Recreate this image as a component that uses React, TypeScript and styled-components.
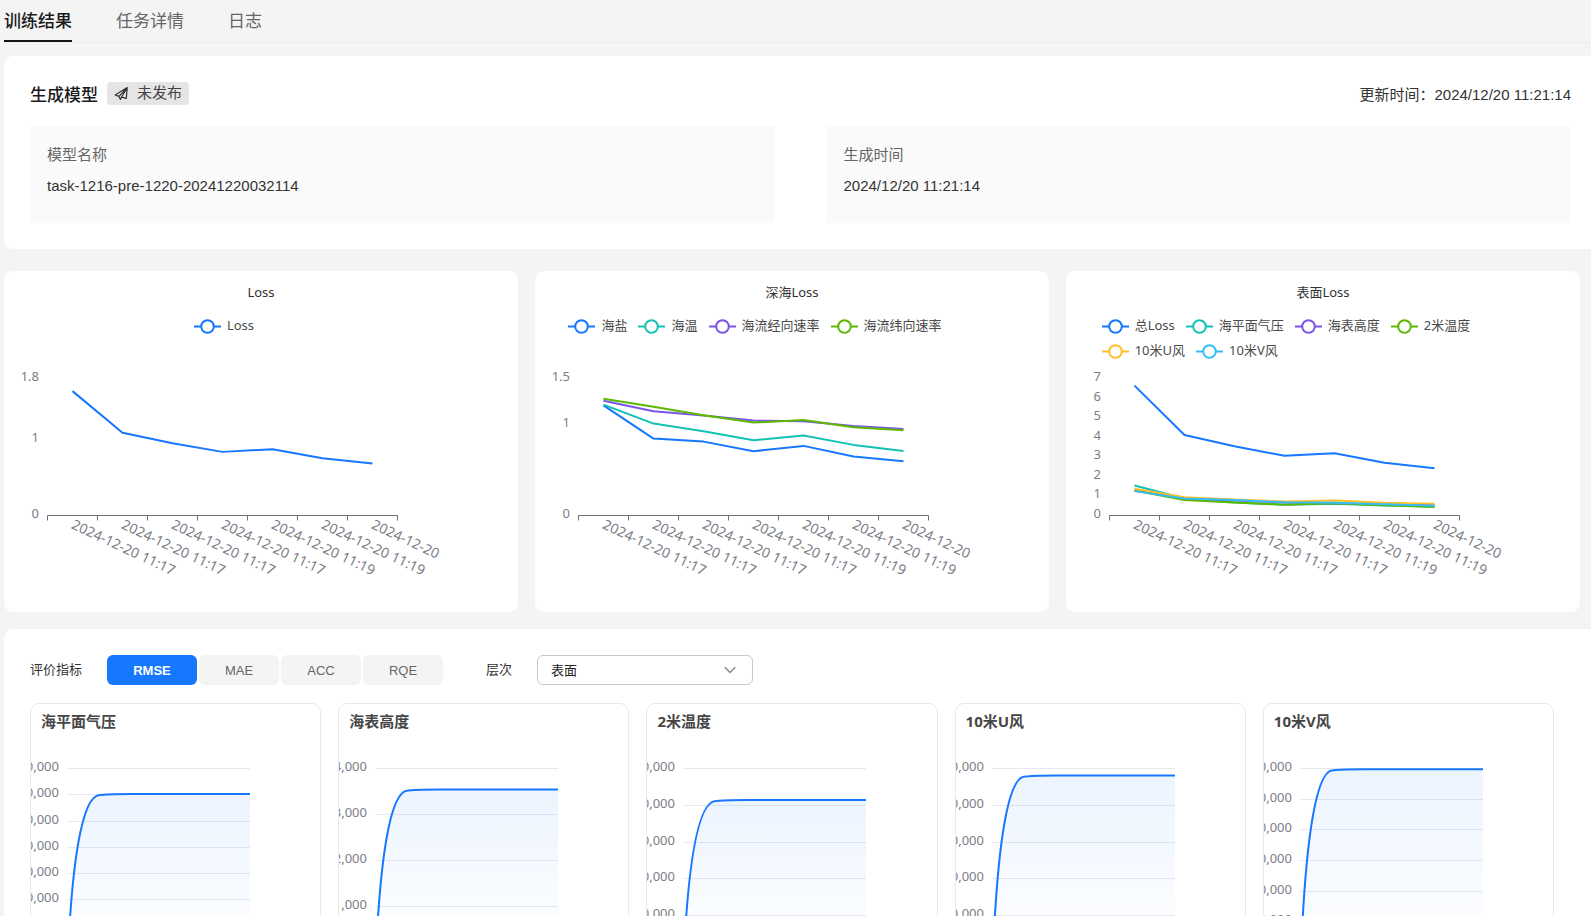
import React, { useState } from "react";
import styled, { createGlobalStyle } from "styled-components";

const uiFont = `"Liberation Sans", "Noto Sans CJK SC", sans-serif`;
const chartFont = `"Noto Sans", "Noto Sans CJK SC", sans-serif`;

const GlobalStyle = createGlobalStyle`
  *, *::before, *::after { box-sizing: border-box; }
  body { margin: 0; background: #f4f4f4; font-family: ${uiFont}; color: #333; }
  button, select { font-family: inherit; }
  h2, h3, p, dl, dd { margin: 0; }
`;

const Page = styled.main`
  height: 100vh;
  overflow-x: hidden;
  overflow-y: auto;
  scrollbar-width: none;
  padding-left: 4px;
`;

const Tabs = styled.nav`
  display: flex;
  gap: 44px;
  height: 43px;
  border-bottom: 1px solid #ececec;
`;

const Tab = styled.button<{ $active: boolean }>`
  height: 42px;
  padding: 4px 0 0;
  border: 0;
  border-bottom: 2px solid ${(p) => (p.$active ? "#141414" : "transparent")};
  background: none;
  font-size: 17px;
  line-height: 36px;
  font-weight: ${(p) => (p.$active ? 500 : 400)};
  color: ${(p) => (p.$active ? "#1a1a1a" : "#666")};
  cursor: pointer;
`;

const Panel = styled.section`
  background: #fff;
  border-radius: 9px 0 0 9px;
  padding: 26px 20px 26px 26px;
`;

const ModelPanel = styled(Panel)`
  margin-top: 13px;
`;

const ModelHeader = styled.header`
  display: flex;
  align-items: flex-start;
  height: 26px;
  margin-bottom: 18px;
`;

const ModelTitle = styled.h2`
  font-size: 17px;
  line-height: 28px;
  font-weight: 500;
  color: #1a1a1a;
`;

const Badge = styled.span`
  display: flex;
  align-items: center;
  gap: 8px;
  height: 23px;
  margin-left: 9px;
  padding: 0 7px 1px;
  border-radius: 4px;
  background: #e5e5e5;
  font-size: 15px;
  line-height: 20px;
  color: #444;
`;

const Updated = styled.p`
  margin-left: auto;
  font-size: 15px;
  line-height: 26px;
`;

const InfoGrid = styled.dl`
  display: grid;
  grid-template-columns: 1fr 1fr;
  gap: 52px;
`;

const InfoBox = styled.div`
  display: flex;
  flex-direction: column;
  gap: 9px;
  padding: 18px 17px 26px;
  background: #fafafa;
  font-size: 15px;
  line-height: 22px;

  dt { color: #666; }
`;

const LossGrid = styled.section`
  display: grid;
  grid-template-columns: repeat(3, 1fr);
  gap: 17px;
  margin: 22px 11px 17px 0;
`;

const LossCard = styled.article`
  min-width: 0;
  padding-top: 10px;
  padding-bottom: 16px;
  border-radius: 9px;
  background: #fff;
  font-family: ${chartFont};
  font-size: 13px;
  overflow: hidden;
`;

const LossTitle = styled.h3`
  font-size: 13px;
  line-height: 22px;
  font-weight: 400;
  text-align: center;
`;

const LegendArea = styled.div`
  display: flex;
  justify-content: center;
  width: 440px;
  height: 56px;
  padding-top: 10px;
`;

const LegendRow = styled.ul`
  display: flex;
  gap: 11px;
  margin: 0;
  padding: 0;
  list-style: none;
`;

const LegendItem = styled.li`
  display: flex;
  align-items: center;
  gap: 6px;
  line-height: 25px;
  white-space: nowrap;
  color: #4a4a4a;
`;

const PlotSvg = styled.svg`
  display: block;
  font-family: ${chartFont};
  font-size: 13px;
  fill: #7c7e87;
`;

const TimeLabel = styled.text`
  font-size: 14px;
`;

const Controls = styled.div`
  display: flex;
  align-items: center;
  height: 30px;
  font-size: 13px;
`;

const ControlLabel = styled.label`
  margin-right: 25px;
  line-height: 20px;
`;

const MetricGroup = styled.div`
  display: flex;
  gap: 2px;
  margin-right: 43px;
`;

const MetricButton = styled.button<{ $active: boolean }>`
  width: ${(p) => (p.$active ? 90 : 80)}px;
  height: 30px;
  padding: 0;
  border: 0;
  border-radius: 6px;
  background: ${(p) => (p.$active ? "#1677ff" : "#f4f4f4")};
  color: ${(p) => (p.$active ? "#fff" : "#666")};
  font-size: 13px;
  font-weight: ${(p) => (p.$active ? 700 : 400)};
  cursor: pointer;
`;

const SelectWrap = styled.div`
  position: relative;
  width: 216px;

  svg {
    position: absolute;
    right: 17px;
    top: 10px;
    pointer-events: none;
  }
`;

const Select = styled.select`
  appearance: none;
  display: block;
  width: 100%;
  height: 30px;
  padding: 0 30px 0 13px;
  border: 1px solid #c8c8c8;
  border-radius: 6px;
  background: #fff;
  color: #222;
  font-size: 13px;
`;

const MetricPanel = styled(Panel)`
  padding-right: 37px;
`;

const MetricGrid = styled.div`
  display: grid;
  grid-template-columns: repeat(5, 1fr);
  gap: 17px;
  margin-top: 18px;
`;

const MetricCard = styled.article`
  min-width: 0;
  border: 1px solid #e9e9e9;
  border-radius: 9px;
  overflow: hidden;
  font-family: ${chartFont};
`;

const MetricTitle = styled.h3`
  padding: 5px 10px 7px;
  font-size: 15px;
  line-height: 24px;
  font-weight: 700;
  color: #464646;
`;

type Series = { name: string; color: string; values: number[] };
type LossChart = { title: string; max: number; ticks: number[]; legendRows: number[]; series: Series[] };

const BLUE = "#1677ff";
const TEAL = "#13c2b5";
const PURPLE = "#7a55e8";
const GREEN = "#5cb800";
const YELLOW = "#ffbf2b";
const SKY = "#36bdf8";

const times = [
  "2024-12-20 11:17",
  "2024-12-20 11:17",
  "2024-12-20 11:17",
  "2024-12-20 11:17",
  "2024-12-20 11:19",
  "2024-12-20 11:19",
  "2024-12-20",
];

const lossCharts: LossChart[] = [
  {
    title: "Loss",
    max: 1.8,
    ticks: [0, 1, 1.8],
    legendRows: [1],
    series: [{ name: "Loss", color: BLUE, values: [1.64, 1.09, 0.953, 0.839, 0.874, 0.755, 0.685] }],
  },
  {
    title: "深海Loss",
    max: 1.5,
    ticks: [0, 1, 1.5],
    legendRows: [4],
    series: [
      { name: "海盐", color: BLUE, values: [1.211, 0.845, 0.812, 0.706, 0.765, 0.648, 0.596] },
      { name: "海温", color: TEAL, values: [1.218, 1.01, 0.926, 0.827, 0.878, 0.776, 0.71] },
      { name: "海流经向速率", color: PURPLE, values: [1.262, 1.145, 1.098, 1.043, 1.035, 0.984, 0.951] },
      { name: "海流纬向速率", color: GREEN, values: [1.284, 1.196, 1.101, 1.021, 1.05, 0.97, 0.937] },
    ],
  },
  {
    title: "表面Loss",
    max: 7,
    ticks: [0, 1, 2, 3, 4, 5, 6, 7],
    legendRows: [4, 2],
    series: [
      { name: "总Loss", color: BLUE, values: [6.66, 4.13, 3.55, 3.06, 3.19, 2.71, 2.42] },
      { name: "海平面气压", color: TEAL, values: [1.54, 0.87, 0.67, 0.55, 0.6, 0.51, 0.46] },
      { name: "海表高度", color: PURPLE, values: [1.31, 0.87, 0.77, 0.67, 0.63, 0.58, 0.53] },
      { name: "2米温度", color: GREEN, values: [1.28, 0.8, 0.67, 0.55, 0.63, 0.53, 0.44] },
      { name: "10米U风", color: YELLOW, values: [1.37, 0.94, 0.82, 0.72, 0.77, 0.65, 0.6] },
      { name: "10米V风", color: SKY, values: [1.25, 0.87, 0.79, 0.68, 0.65, 0.58, 0.5] },
    ],
  },
];

function LegendMark({ color }: { color: string }) {
  return (
    <svg width="27" height="16" fill="#fff" stroke={color} strokeWidth="2" aria-hidden="true">
      <path d="M0 8.5H27" />
      <circle cx="13.5" cy="8.5" r="6.3" />
    </svg>
  );
}

function Legend({ chart }: { chart: LossChart }) {
  let start = 0;
  return (
    <LegendArea>
      <div>
        {chart.legendRows.map((count) => {
          const items = chart.series.slice(start, start + count);
          start += count;
          return (
            <LegendRow key={items[0].name}>
              {items.map((s) => (
                <LegendItem key={s.name}>
                  <LegendMark color={s.color} />
                  {s.name}
                </LegendItem>
              ))}
            </LegendRow>
          );
        })}
      </div>
    </LegendArea>
  );
}

const AXIS_X = 43.5;
const AXIS_Y = 156.5;
const STEP = 50;
const PLOT_HEIGHT = 136.5;

function LossPlot({ chart }: { chart: LossChart }) {
  const y = (v: number) => AXIS_Y - (v / chart.max) * PLOT_HEIGHT;
  const x = (i: number) => AXIS_X + STEP * (i + 0.5);
  return (
    <PlotSvg width="460" height="237" role="img" aria-label={chart.title}>
      {chart.ticks.map((t) => (
        <text key={t} x="35" y={y(t) + 2} textAnchor="end">
          {t}
        </text>
      ))}
      <path
        d={`M${AXIS_X} ${AXIS_Y}h${STEP * 7}` + times.concat("").map((_, i) => `M${AXIS_X + STEP * i} ${AXIS_Y}v5`).join("")}
        stroke="#6e7079"
        fill="none"
      />
      {times.map((t, i) => (
        <TimeLabel key={i} transform={`translate(${x(i)} ${AXIS_Y + 8}) rotate(25)`} y="5">
          {t}
        </TimeLabel>
      ))}
      {chart.series.map((s) => (
        <polyline
          key={s.name}
          points={s.values.map((v, i) => `${x(i)},${y(v)}`).join(" ")}
          fill="none"
          stroke={s.color}
          strokeWidth="2"
          strokeLinejoin="bevel"
        />
      ))}
    </PlotSvg>
  );
}

type Metric = { title: string; steps: number; unit: number; level: number };

const metrics: Metric[] = [
  { title: "海平面气压", steps: 7, unit: 10000, level: 0.864 },
  { title: "海表高度", steps: 4, unit: 1000, level: 0.888 },
  { title: "2米温度", steps: 5, unit: 10000, level: 0.832 },
  { title: "10米U风", steps: 5, unit: 10000, level: 0.964 },
  { title: "10米V风", steps: 6, unit: 10000, level: 0.998 },
];

const AREA_TOP = 29;
const AREA_HEIGHT = 184;

function MetricPlot({ metric, id }: { metric: Metric; id: string }) {
  const bottom = AREA_TOP + AREA_HEIGHT;
  const rise = metric.level * AREA_HEIGHT;
  const top = bottom - rise;
  const curve = `M37 ${bottom}C41 ${top + rise * 0.47} 50 ${top + 1} 69 ${top + 1}Q82 ${top} 100 ${top}H219`;
  const lines = Array.from({ length: metric.steps + 1 }, (_, i) => i);
  return (
    <PlotSvg width="240" height="240" role="img" aria-label={metric.title}>
      <defs>
        <linearGradient id={id} x1="0" y1="0" x2="0" y2="1">
          <stop offset="0" stopColor={BLUE} stopOpacity="0.08" />
          <stop offset="1" stopColor={BLUE} stopOpacity="0" />
        </linearGradient>
      </defs>
      {lines.map((n) => {
        const lineY = Math.round(bottom - (n / metric.steps) * AREA_HEIGHT) - 0.5;
        return (
          <g key={n}>
            <path d={`M36 ${lineY}H219`} stroke="#e4e9f3" />
            <text x="28" y={lineY + 2.5} textAnchor="end">
              {(n * metric.unit).toLocaleString("en-US")}
            </text>
          </g>
        );
      })}
      <path d={`${curve}V${bottom}Z`} fill={`url(#${id})`} />
      <path d={curve} fill="none" stroke={BLUE} strokeWidth="2" />
    </PlotSvg>
  );
}

const tabNames = ["训练结果", "任务详情", "日志"];
const metricNames = ["RMSE", "MAE", "ACC", "RQE"];

export default function App() {
  const [tab, setTab] = useState(tabNames[0]);
  const [metric, setMetric] = useState(metricNames[0]);
  return (
    <Page>
      <GlobalStyle />
      <Tabs>
        {tabNames.map((name) => (
          <Tab key={name} $active={name === tab} onClick={() => setTab(name)}>
            {name}
          </Tab>
        ))}
      </Tabs>

      <ModelPanel>
        <ModelHeader>
          <ModelTitle>生成模型</ModelTitle>
          <Badge>
            <svg width="15" height="15" viewBox="0 0 15 15" fill="none" stroke="#333" strokeWidth="1.2" strokeLinejoin="round" aria-hidden="true">
              <path d="M13.2 1.6L1.2 9L5 10.4L6.4 13.4L7.4 11.2L12.3 12.4ZM5 10.4L13.2 1.6L7.4 11.2" />
            </svg>
            未发布
          </Badge>
          <Updated>更新时间：2024/12/20 11:21:14</Updated>
        </ModelHeader>
        <InfoGrid>
          <InfoBox>
            <dt>模型名称</dt>
            <dd>task-1216-pre-1220-20241220032114</dd>
          </InfoBox>
          <InfoBox>
            <dt>生成时间</dt>
            <dd>2024/12/20 11:21:14</dd>
          </InfoBox>
        </InfoGrid>
      </ModelPanel>

      <LossGrid>
        {lossCharts.map((chart) => (
          <LossCard key={chart.title}>
            <LossTitle>{chart.title}</LossTitle>
            <Legend chart={chart} />
            <LossPlot chart={chart} />
          </LossCard>
        ))}
      </LossGrid>

      <MetricPanel>
        <Controls>
          <ControlLabel as="span" id="metric-label">评价指标</ControlLabel>
          <MetricGroup role="group" aria-labelledby="metric-label">
            {metricNames.map((name) => (
              <MetricButton key={name} $active={name === metric} aria-pressed={name === metric} onClick={() => setMetric(name)}>
                {name}
              </MetricButton>
            ))}
          </MetricGroup>
          <ControlLabel htmlFor="level">层次</ControlLabel>
          <SelectWrap>
            <Select id="level" defaultValue="表面">
              <option>表面</option>
            </Select>
            <svg width="12" height="10" fill="none" stroke="#888" strokeWidth="1.4" aria-hidden="true">
              <path d="M0.8 2.2L6 7.6L11.2 2.2" />
            </svg>
          </SelectWrap>
        </Controls>
        <MetricGrid>
          {metrics.map((m, i) => (
            <MetricCard key={m.title}>
              <MetricTitle>{m.title}</MetricTitle>
              <MetricPlot metric={m} id={`area-${i}`} />
            </MetricCard>
          ))}
        </MetricGrid>
      </MetricPanel>
    </Page>
  );
}
